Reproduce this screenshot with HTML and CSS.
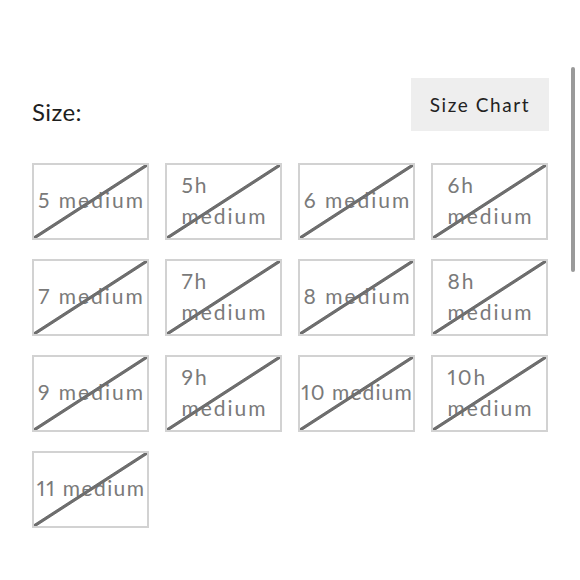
FILE: index.html
```html
<!DOCTYPE html>
<html lang="en">
<head>
<meta charset="utf-8">
<title>Size</title>
<link rel="stylesheet" href="styles.css">
</head>
<body>
<div class="page">
  <div class="size-header">
    <span class="size-label">Size:</span>
    <button class="size-chart" type="button">Size Chart</button>
  </div>
  <div class="size-grid">
    <div class="size-option"><span class="size-text">5 medium</span></div>
    <div class="size-option"><span class="size-text">5h<br>medium</span></div>
    <div class="size-option"><span class="size-text">6 medium</span></div>
    <div class="size-option"><span class="size-text">6h<br>medium</span></div>
    <div class="size-option"><span class="size-text">7 medium</span></div>
    <div class="size-option"><span class="size-text">7h<br>medium</span></div>
    <div class="size-option"><span class="size-text">8 medium</span></div>
    <div class="size-option"><span class="size-text">8h<br>medium</span></div>
    <div class="size-option"><span class="size-text">9 medium</span></div>
    <div class="size-option"><span class="size-text">9h<br>medium</span></div>
    <div class="size-option"><span class="size-text size-text--tight">10 medium</span></div>
    <div class="size-option"><span class="size-text">10h<br>medium</span></div>
    <div class="size-option"><span class="size-text size-text--narrow">11 medium</span></div>
  </div>
</div>
<div class="scrollbar"></div>
</body>
</html>
```
FILE: styles.css
```css
html, body {
  margin: 0;
  padding: 0;
  background: #ffffff;
}

body {
  font-family: Lato, "Liberation Sans", sans-serif;
  color: #222222;
  width: 580px;
  height: 580px;
  overflow: hidden;
  position: relative;
}

.page {
  padding: 78px 31px 0 32px;
}

.size-header {
  display: flex;
  justify-content: space-between;
  align-items: flex-start;
}

.size-label {
  font-size: 24px;
  letter-spacing: 0.4px;
  line-height: 29px;
  margin-top: 19px;
  color: #1e1e1e;
}

.size-chart {
  width: 138px;
  height: 53px;
  border: none;
  background: #eeeeee;
  font-family: Lato, "Liberation Sans", sans-serif;
  font-size: 19px;
  letter-spacing: 1.6px;
  color: #222222;
  padding: 0;
  margin: 0;
}

.size-grid {
  margin-top: 32px;
  display: grid;
  grid-template-columns: repeat(4, 117px);
  grid-auto-rows: 77px;
  column-gap: 16px;
  row-gap: 19px;
}

.size-option {
  position: relative;
  box-sizing: border-box;
  border: 2px solid #d2d2d2;
  padding: 0 0 4px 0;
  display: flex;
  align-items: center;
  justify-content: center;
  font-size: 21px;
  line-height: 31px;
  letter-spacing: 2px;
  color: #7a7a7a;
  white-space: nowrap;
  font-variant-numeric: proportional-nums;
}

.size-text {
  margin-right: -2px;
}

.size-text--tight {
  letter-spacing: 1.1px;
  margin-right: -1px;
}

.size-text--narrow {
  letter-spacing: 1.4px;
  margin-right: -1px;
}

.size-option::after {
  content: "";
  position: absolute;
  inset: 0;
  background: linear-gradient(to bottom right,
    transparent calc(50% - 2px),
    #6e6e6e calc(50% - 1.2px),
    #6e6e6e calc(50% + 1.2px),
    transparent calc(50% + 2px));
}

.scrollbar {
  position: absolute;
  left: 571px;
  top: 67px;
  width: 4px;
  height: 205px;
  border-radius: 2px;
  background: #9a9a9a;
}
```
